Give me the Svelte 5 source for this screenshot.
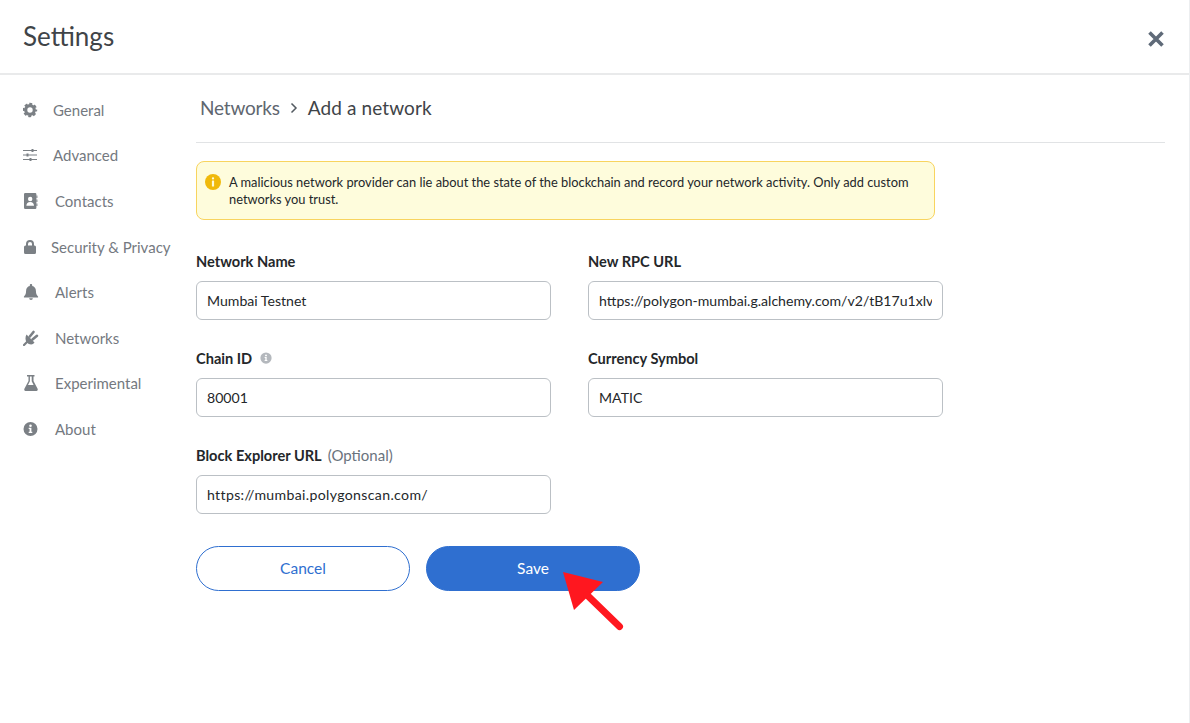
<script>
  const navItems = [
    { label: 'General', icon: 'gear', gap: 'g30' },
    { label: 'Advanced', icon: 'sliders', gap: 'g30' },
    { label: 'Contacts', icon: 'book', gap: 'g32' },
    { label: 'Security & Privacy', icon: 'lock', gap: 'g28' },
    { label: 'Alerts', icon: 'bell', gap: 'g32' },
    { label: 'Networks', icon: 'plug', gap: 'g32' },
    { label: 'Experimental', icon: 'flask', gap: 'g32' },
    { label: 'About', icon: 'info', gap: 'g32' }
  ];
</script>

<div class="page">
  <header class="top">
    <h1>Settings</h1>
    <svg class="close" viewBox="0 0 16 16" width="16" height="16" aria-label="Close">
      <path d="M1.5 1.5 14.5 14.5M14.5 1.5 1.5 14.5" stroke="#5f6a78" stroke-width="3.6" fill="none" />
    </svg>
  </header>

  <div class="body">
    <nav class="side">
      {#each navItems as item}
        <div class="nav-item {item.gap}">
          <svg class="nav-icon" viewBox="0 0 16 16" width="16" height="16">
            {#if item.icon === 'gear'}
              <circle cx="7" cy="8" r="4.3" fill="none" stroke="currentColor" stroke-width="3.2" />
              <circle cx="7" cy="8" r="6.2" fill="none" stroke="currentColor" stroke-width="2" stroke-dasharray="2.9 1.97" stroke-dashoffset="1.45" />
            {:else if item.icon === 'sliders'}
              <path d="M0 3h14v1H0zM0 7.5h14v1H0zM0 12h14v1H0z" />
              <path d="M8.5 2h2v3h-2zM3.500 6.500h2v3h-2zM6.500 11h2v3h-2z" />
            {:else if item.icon === 'book'}
              <path fill-rule="evenodd" d="M2.200 0h10a1.200 1.200 0 0 1 1.200 1.200v13.600a1.200 1.200 0 0 1-1.200 1.200h-10a1.200 1.200 0 0 1-1.200-1.200V1.200A1.200 1.200 0 0 1 2.200 0zM7.200 3.800a2.200 2.200 0 1 0 0 4.400 2.200 2.200 0 0 0 0-4.400zM3.400 12.800h7.600c0-2.500-1.400-3.800-3.800-3.800s-3.800 1.300-3.800 3.800z" />
              <path d="M13.400 2.500h1v2.500h-1zM13.400 6.500h1V9h-1zM13.400 10.500h1V13h-1z" />
            {:else if item.icon === 'lock'}
              <path fill-rule="evenodd" d="M3 6.500V5a4 4 0 0 1 8 0v1.500h.5A1.500 1.500 0 0 1 13 8v5.500a1.500 1.500 0 0 1-1.500 1.500h-9A1.500 1.500 0 0 1 1 13.500V8a1.500 1.500 0 0 1 1.500-1.500zM5 6.500h4V5a2 2 0 0 0-4 0z" />
            {:else if item.icon === 'bell'}
              <path d="M8 0c.7 0 1.200.5 1.200 1.200v.8c2.300.5 3.700 2.400 3.700 4.700 0 3.500 1.100 4.600 2.100 5.700.4.500.1 1.200-.6 1.200H1.600c-.7 0-1-.7-.6-1.200 1-1.100 2.100-2.200 2.100-5.700 0-2.300 1.400-4.200 3.700-4.700v-.8C6.800.5 7.300 0 8 0zM6.200 14.300h3.600C9.800 15.300 9 16 8 16s-1.800-.7-1.800-1.700z" />
            {:else if item.icon === 'plug'}
              <path d="M3.500 4.500 11.500 12.500 10 14C7.800 15 5.400 14 3.800 12.400 2.200 10.800 2 7 3.500 4.500z" />
              <path d="M6.800 6.500 10.500 2M9.500 9.500 14 5.800" stroke="currentColor" stroke-width="2.6" stroke-linecap="round" fill="none" />
              <path d="M4.500 11.500 1 15" stroke="currentColor" stroke-width="2.2" stroke-linecap="round" fill="none" />
            {:else if item.icon === 'flask'}
              <path fill-rule="evenodd" d="M4 0h7.500v1.400h-1v4.500l4.100 7.900c.5 1-.1 2.200-1.100 2.200H2.500c-1 0-1.600-1.200-1.100-2.200l4.100-7.900V1.400H4zM6.900 1.400v4.900L5 10h5.600L8.700 6.300V1.400z" />
            {:else if item.icon === 'info'}
              <path fill-rule="evenodd" d="M7.500 1a7 7 0 1 1 0 14 7 7 0 0 1 0-14zM7.500 3.400a1.300 1.300 0 1 0 0 2.600 1.300 1.300 0 0 0 0-2.600zM5.700 6.800v1.300h.9v2.600h-.9V12h3.600v-1.300h-.9V6.800z" />
            {/if}
          </svg>
          <span>{item.label}</span>
        </div>
      {/each}
    </nav>

    <main class="content">
      <div class="crumbs">
        <span class="crumb-parent">Networks</span>
        <svg class="chevron" viewBox="0 0 8 12" width="8" height="12">
          <path d="M1.5 1.5 6 6l-4.500 4.500" stroke="#535a61" stroke-width="1.5" fill="none" />
        </svg>
        <span class="crumb-current">Add a network</span>
      </div>

      <div class="warning">
        <svg class="warning-icon" viewBox="0 0 16 16" width="16" height="16">
          <circle cx="8" cy="8" r="8" fill="#f0b90b" />
          <rect x="6.9" y="3.3" width="2.2" height="2.2" rx="1" fill="#fdfad8" />
          <rect x="6.9" y="6.6" width="2.2" height="6" rx=".4" fill="#fdfad8" />
        </svg>
        <p>A malicious network provider can lie about the state of the blockchain and record your network activity. Only add custom networks you trust.</p>
      </div>

      <div class="form">
        <div class="field">
          <div class="label">Network Name</div>
          <input type="text" value="Mumbai Testnet" />
        </div>
        <div class="field">
          <div class="label">New RPC URL</div>
          <input type="text" value="https://polygon-mumbai.g.alchemy.com/v2/tB17u1xlvAbCdEfGh" />
        </div>
        <div class="field">
          <div class="label">
            Chain ID
            <svg class="hint" viewBox="0 0 16 16" width="12" height="12">
              <path fill="#b4b8bd" fill-rule="evenodd" d="M8 .5a7.500 7.500 0 1 1 0 15 7.500 7.500 0 0 1 0-15zM8 3.200a1.300 1.300 0 1 0 0 2.600 1.300 1.300 0 0 0 0-2.600zM6.200 6.800v1.300h.9v2.600h-.9V12h3.600v-1.300h-.9V6.800z" />
            </svg>
          </div>
          <input type="text" value="80001" />
        </div>
        <div class="field">
          <div class="label">Currency Symbol</div>
          <input type="text" value="MATIC" />
        </div>
        <div class="field">
          <div class="label">Block Explorer URL <span class="optional">(Optional)</span></div>
          <input class="explorer" type="text" value="https://mumbai.polygonscan.com/" />
        </div>
      </div>

      <div class="actions">
        <button class="btn cancel">Cancel</button>
        <button class="btn save">Save</button>
      </div>
    </main>
  </div>

  <svg class="arrow" viewBox="0 0 70 75" width="70" height="75">
    <path d="M3 4 43 14 14 42z" fill="#ff171f" />
    <path d="M27 27 59.5 58.5" stroke="#ff171f" stroke-width="7" stroke-linecap="round" />
  </svg>
</div>

<style>
  :global(body) {
    margin: 0;
    background: #fff;
  }

  .page {
    position: relative;
    box-sizing: border-box;
    height: 723px;
    font-family: Lato, "Open Sans", sans-serif;
    color: #24272a;
    border-right: 1px solid #eceef0;
    overflow: hidden;
  }

  .top {
    box-sizing: border-box;
    height: 75px;
    padding: 0 25px 0 23px;
    display: flex;
    align-items: center;
    justify-content: space-between;
    border-bottom: 2px solid #e9eaeb;
  }

  h1 {
    margin: 0;
    font-size: 26px;
    font-weight: 400;
    color: #3f4448;
    position: relative;
    top: -1px;
  }

  .close {
    display: block;
    position: relative;
    top: 2px;
  }

  .body {
    display: flex;
  }

  .side {
    box-sizing: border-box;
    width: 196px;
    padding: 12px 0 0 23px;
    flex: none;
  }

  .nav-item {
    height: 45.6px;
    display: flex;
    align-items: center;
    font-size: 15px;
    color: #74797f;
    white-space: nowrap;
  }

  .nav-icon {
    color: #7b8085;
    fill: #7b8085;
    flex: none;
  }

  .g28 .nav-icon { margin-right: 12px; }
  .g30 .nav-icon { margin-right: 14px; }
  .g32 .nav-icon { margin-right: 16px; }

  .content {
    flex: 1;
    padding-right: 24px;
  }

  .crumbs {
    box-sizing: border-box;
    height: 68px;
    padding: 0 0 2px 4px;
    display: flex;
    align-items: center;
    font-size: 19px;
    border-bottom: 1px solid #e1e3e5;
    margin-bottom: 18px;
  }

  .crumb-parent {
    color: #5f6770;
    letter-spacing: -0.2px;
  }

  .chevron {
    margin: 1px 10px 0 10px;
  }

  .crumb-current {
    color: #3f4448;
    letter-spacing: 0.1px;
  }

  .warning {
    box-sizing: border-box;
    width: 739px;
    height: 59px;
    padding: 12px 16px 0 8px;
    display: flex;
    gap: 8px;
    background: #fefcdc;
    border: 1px solid #f8d45f;
    border-radius: 8px;
  }

  .warning-icon {
    flex: none;
  }

  .warning p {
    margin: 0;
    font-size: 12.85px;
    line-height: 16.5px;
    color: #24272a;
  }

  .form {
    margin-top: 31px;
    display: grid;
    grid-template-columns: 355px 355px;
    column-gap: 37px;
    row-gap: 28px;
  }

  .label {
    box-sizing: border-box;
    height: 20px;
    margin-bottom: 10px;
    display: flex;
    align-items: center;
    gap: 6px;
    font-size: 14.6px;
    font-weight: 700;
    color: #24272a;
    white-space: nowrap;
  }

  .hint {
    margin-left: 2px;
  }

  .optional {
    font-size: 15px;
    font-weight: 400;
    color: #6a737d;
  }

  input {
    display: block;
    box-sizing: border-box;
    width: 100%;
    height: 39px;
    padding: 0 10px;
    border: 1px solid #bbc0c5;
    border-radius: 6px;
    background: #fff;
    font: 400 14.1px Lato, "Open Sans", sans-serif;
    color: #24272a;
    outline: none;
  }

  .explorer {
    letter-spacing: 0.35px;
  }

  .actions {
    margin-top: 32px;
    display: flex;
    gap: 16px;
  }

  .btn {
    box-sizing: border-box;
    width: 214px;
    height: 45px;
    padding: 0 0 2px;
    border-radius: 23px;
    font: 400 15.5px Lato, "Open Sans", sans-serif;
  }

  .cancel {
    background: #fff;
    border: 1px solid #2f6fd0;
    color: #2f6fd0;
  }

  .save {
    background: #2f6fd0;
    border: 1px solid #2f6fd0;
    color: #fff;
  }

  .arrow {
    position: absolute;
    left: 560px;
    top: 568px;
  }
</style>
